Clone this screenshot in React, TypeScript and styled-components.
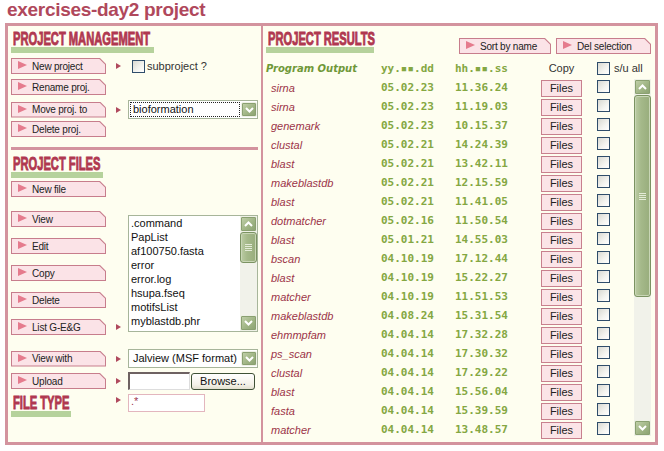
import React from 'react';
import styled, { createGlobalStyle } from 'styled-components';

const sans = `"Liberation Sans", Arial, sans-serif`;
const mono = `"DejaVu Sans Mono", "Liberation Mono", monospace`;

const C = {
  cream: '#fefef0',
  frame: '#d3939e',
  title: '#b0485c',
  heading: '#b03850',
  greenBar: '#b6d29c',
  green: '#84a742',
  name: '#9c3448',
  btnBg: '#fbe3e7',
  btnBorder: '#c77d8c',
  btnArrow: '#e57b8d',
  marker: '#b04a5e',
};

const GlobalStyle = createGlobalStyle`
  html, body { margin: 0; padding: 0; background: #fff; }
  body { font-family: ${sans}; }
  * { box-sizing: border-box; }
`;

const Page = styled.div`
  width: 664px;
  height: 451px;
  overflow: hidden;
  background: #fff;
`;

const AppTitle = styled.h1`
  margin: 0;
  padding-left: 7px;
  height: 20px;
  font: bold 19px/20px ${sans};
  letter-spacing: -0.3px;
  color: ${C.title};
`;

const Frame = styled.div`
  margin: 3px 0 0 5px;
  width: 653px;
  height: 422px;
  border: 3px solid ${C.frame};
  background: ${C.cream};
  display: flex;
`;

const LeftPanel = styled.section`
  width: 255px;
  flex: none;
  border-right: 2px solid ${C.frame};
  padding: 5px 0 0 3px;
  display: flex;
  flex-direction: column;
  align-items: flex-start;
`;

const RightPanel = styled.section`
  flex: 1;
  min-width: 0;
  padding: 5px 4px 0 3px;
  display: flex;
  flex-direction: column;
`;

/* ---------- section titles ---------- */
const TitleBlock = styled.div<{ $bar: number; $mt?: number }>`
  width: ${(p) => p.$bar}px;
  margin-top: ${(p) => p.$mt ?? 0}px;
  flex: none;
`;
const TitleText = styled.div`
  margin-left: 1.5px;
  font: bold 18px/16px ${sans};
  color: ${C.heading};
  white-space: nowrap;
  transform: scaleX(0.62);
  transform-origin: 0 0;
  -webkit-text-stroke: 0.9px ${C.heading};
`;
const TitleBar = styled.div`
  height: 6px;
  background: ${C.greenBar};
`;

function SectionTitle({ text, bar, mt }: { text: string; bar: number; mt?: number }) {
  return (
    <TitleBlock $bar={bar} $mt={mt}>
      <TitleText>{text}</TitleText>
      <TitleBar />
    </TitleBlock>
  );
}

/* ---------- buttons ---------- */
const ActionButton = styled.button<{ $w?: number }>`
  position: relative;
  width: ${(p) => p.$w ?? 95}px;
  height: 16px;
  padding: 0 0 0 21px;
  margin: 0;
  border: 0;
  background: ${C.btnBorder};
  clip-path: polygon(0 0, calc(100% - 6px) 0, 100% 6px, 100% 100%, 0 100%);
  display: flex;
  align-items: center;
  font: 10px ${sans};
  letter-spacing: -0.2px;
  color: #222;
  text-align: left;
  white-space: nowrap;
  cursor: pointer;
  &::before {
    content: '';
    position: absolute;
    inset: 1px 1px 1px 1px;
    background: ${C.btnBg};
    clip-path: polygon(0 0, calc(100% - 5.6px) 0, 100% 5.6px, 100% 100%, 0 100%);
  }
  &::after {
    content: '';
    position: absolute;
    left: 7px;
    top: 3px;
    width: 0;
    height: 0;
    border-left: 9px solid ${C.btnArrow};
    border-top: 4.5px solid transparent;
    border-bottom: 4.5px solid transparent;
  }
  & > span {
    position: relative;
  }
`;

function ActBtn({ children, w }: { children: React.ReactNode; w?: number }) {
  return (
    <ActionButton $w={w}>
      <span>{children}</span>
    </ActionButton>
  );
}

const Marker = styled.span`
  justify-self: start;
  margin-left: 10px;
  width: 0;
  height: 0;
  border-left: 5px solid ${C.marker};
  border-top: 3px solid transparent;
  border-bottom: 3px solid transparent;
`;

const Checkbox = styled.span`
  display: inline-block;
  flex: none;
  width: 13px;
  height: 13px;
  border: 1px solid #2f4d6b;
  background: linear-gradient(135deg, #d9d9d2 0%, #f4f4f0 60%, #ffffff 100%);
`;

const CheckLabel = styled.label`
  display: flex;
  align-items: center;
  gap: 2px;
  margin-left: 4px;
  font: 11px ${sans};
  color: #333;
`;

/* ---------- green XP widgets ---------- */
const ArrowBtn = styled.div<{ $w?: number; $h?: number }>`
  flex: none;
  width: ${(p) => p.$w ?? 17}px;
  height: ${(p) => p.$h ?? 16}px;
  border: 1px solid #eef1e6;
  border-radius: 2px;
  background: linear-gradient(135deg, #c3d2ac 0%, #a0b585 55%, #8aa170 100%);
  box-shadow: inset 0 0 0 1px #8aa071;
  display: flex;
  align-items: center;
  justify-content: center;
`;

function Chevron({ dir }: { dir: 'up' | 'down' }) {
  return (
    <svg width="9" height="6" viewBox="0 0 9 6">
      <polyline
        points={dir === 'up' ? '1,5 4.5,1.5 8,5' : '1,1 4.5,4.5 8,1'}
        fill="none"
        stroke="#fff"
        strokeWidth="2"
      />
    </svg>
  );
}

const ScrollTrack = styled.div<{ $h: number; $mt?: number }>`
  flex: none;
  width: 17px;
  height: ${(p) => p.$h}px;
  margin-top: ${(p) => p.$mt ?? 0}px;
  background: #f1f2ea;
  display: flex;
  flex-direction: column;
`;

const Thumb = styled.div<{ $h: number }>`
  height: ${(p) => p.$h}px;
  border: 1px solid #7b9362;
  border-radius: 3px;
  background: linear-gradient(90deg, #bccca5 0%, #a5b98a 40%, #98ad7c 100%);
  box-shadow: inset 0 0 0 1px #c9d6b6;
  display: flex;
  align-items: center;
  justify-content: center;
`;

const Grip = styled.div`
  width: 7px;
  height: 7px;
  background: repeating-linear-gradient(180deg, #e4ebd8 0 1px, transparent 1px 2px);
`;

const DownSlot = styled.div`
  margin-top: auto;
`;

function Scrollbar({ h, thumb, mt }: { h: number; thumb: number; mt?: number }) {
  return (
    <ScrollTrack $h={h} $mt={mt}>
      <ArrowBtn>
        <Chevron dir="up" />
      </ArrowBtn>
      <Thumb $h={thumb}>
        <Grip />
      </Thumb>
      <DownSlot>
        <ArrowBtn>
          <Chevron dir="down" />
        </ArrowBtn>
      </DownSlot>
    </ScrollTrack>
  );
}

/* ---------- form controls ---------- */
const Select = styled.div`
  width: 130px;
  height: 19px;
  border: 1px solid #a7b59a;
  background: #fff;
  display: flex;
  align-items: center;
  padding: 0 0 0 2px;
  gap: 2px;
  font: 11px ${sans};
  color: #111;
`;

const SelectValue = styled.span<{ $focus?: boolean }>`
  flex: 1;
  height: 13px;
  line-height: 13px;
  padding-left: 2px;
  white-space: nowrap;
  outline: ${(p) => (p.$focus ? '1px dotted #222' : 'none')};
`;

const FormRow = styled.div<{ $mt?: number }>`
  display: grid;
  grid-template-columns: 95px 22px 130px;
  align-items: center;
  height: 16px;
  margin-top: ${(p) => p.$mt ?? 0}px;
`;

const FileTypeRow = styled(FormRow)`
  height: auto;
  align-items: start;
  & > ${Marker} {
    margin-top: 3px;
  }
`;

const Divider = styled.div`
  width: 247px;
  height: 3px;
  margin-top: 10px;
  background: ${C.frame};
`;

const FilesBlock = styled.div`
  display: grid;
  grid-template-columns: 95px 22px 130px;
  grid-template-rows: repeat(5, 16px);
  row-gap: 11px;
  align-items: center;
  margin-top: 14px;
  & > ${ActionButton} {
    grid-column: 1;
  }
`;

const ListMarker = styled(Marker)`
  grid-column: 2;
  grid-row: 5;
`;

const ListBox = styled.div`
  grid-column: 3;
  grid-row: 1 / 6;
  align-self: center;
  height: 117px;
  border: 1px solid #a7b59a;
  background: #fff;
  display: flex;
`;

const ListItems = styled.ul`
  flex: 1;
  margin: 0;
  padding: 0 0 0 2px;
  list-style: none;
  font: 11px/14px ${sans};
  color: #111;
  overflow: hidden;
`;

const UploadGroup = styled.div`
  display: flex;
  align-items: center;
  gap: 1px;
`;

const FileInput = styled.div`
  width: 62px;
  height: 18px;
  background: #fff;
  border-top: 2px solid #6e6262;
  border-left: 2px solid #6e6262;
  border-right: 1px solid #ddd;
  border-bottom: 1px solid #ddd;
`;

const BrowseButton = styled.button`
  width: 64px;
  height: 17px;
  padding: 0;
  border: 1px solid #3f5236;
  border-radius: 3px;
  background: linear-gradient(180deg, #ffffff 0%, #f4f2e8 70%, #e2dfcf 100%);
  font: 11px ${sans};
  color: #111;
`;

const TextInput = styled.div`
  width: 77px;
  height: 18px;
  border: 1px solid #e3b6be;
  background: #fff;
  padding-left: 2px;
  font: 11px/13px ${sans};
  color: #a03850;
`;

/* ---------- results ---------- */
const TopRow = styled.div`
  display: flex;
  justify-content: space-between;
  align-items: flex-start;
`;

const ButtonGroup = styled.div`
  display: flex;
  gap: 5px;
  margin-top: 7px;
`;

const ResultGrid = styled.div<{ $h: number }>`
  display: grid;
  grid-template-columns: 115px 74px 86px 56px 1fr;
  align-items: center;
  height: ${(p) => p.$h}px;
`;

const HeaderRow = styled(ResultGrid)`
  margin-top: 6px;
`;

const HeadName = styled.span`
  font: bold oblique 10px ${`"DejaVu Sans", Verdana, sans-serif`};
  color: #6f9838;
  white-space: nowrap;
`;

const MonoCell = styled.span`
  font: bold 11px ${mono};
  color: ${C.green};
  white-space: nowrap;
`;

const CopyHead = styled.span`
  width: 41px;
  text-align: center;
  font: 11px ${sans};
  color: #333;
`;

const SelectAll = styled.label`
  display: flex;
  align-items: center;
  gap: 4px;
  font: 11px ${sans};
  color: #333;
`;

const ResultsArea = styled.div`
  display: flex;
  margin-top: 2px;
`;

const ResultsList = styled.div`
  flex: 1;
`;

const NameCell = styled.span`
  padding-left: 5px;
  font: italic 11px ${sans};
  color: ${C.name};
`;

const FilesButton = styled.button`
  width: 41px;
  height: 17px;
  padding: 0;
  border: 1px solid #c8808e;
  background: #fbe4e7;
  font: 11px ${sans};
  color: #222;
`;

const results: [string, string, string][] = [
  ['sirna', '05.02.23', '11.36.24'],
  ['sirna', '05.02.23', '11.19.03'],
  ['genemark', '05.02.23', '10.15.37'],
  ['clustal', '05.02.21', '14.24.39'],
  ['blast', '05.02.21', '13.42.11'],
  ['makeblastdb', '05.02.21', '12.15.59'],
  ['blast', '05.02.21', '11.41.05'],
  ['dotmatcher', '05.02.16', '11.50.54'],
  ['blast', '05.01.21', '14.55.03'],
  ['bscan', '04.10.19', '17.12.44'],
  ['blast', '04.10.19', '15.22.27'],
  ['matcher', '04.10.19', '11.51.53'],
  ['makeblastdb', '04.08.24', '15.31.54'],
  ['ehmmpfam', '04.04.14', '17.32.28'],
  ['ps_scan', '04.04.14', '17.30.32'],
  ['clustal', '04.04.14', '17.29.22'],
  ['blast', '04.04.14', '15.56.04'],
  ['fasta', '04.04.14', '15.39.59'],
  ['matcher', '04.04.14', '13.48.57'],
];

const files = [
  '.command',
  'PapList',
  'af100750.fasta',
  'error',
  'error.log',
  'hsupa.fseq',
  'motifsList',
  'myblastdb.phr',
];

export default function App() {
  return (
    <Page>
      <GlobalStyle />
      <AppTitle>exercises-day2 project</AppTitle>
      <Frame>
        <LeftPanel>
          <SectionTitle text="PROJECT MANAGEMENT" bar={143} />
          <FormRow $mt={5}>
            <ActBtn>New project</ActBtn>
            <Marker />
            <CheckLabel>
              <Checkbox />
              subproject ?
            </CheckLabel>
          </FormRow>
          <FormRow $mt={5}>
            <ActBtn>Rename proj.</ActBtn>
          </FormRow>
          <FormRow $mt={5}>
            <ActBtn>Move proj. to</ActBtn>
            <Marker />
            <Select>
              <SelectValue $focus>bioformation</SelectValue>
              <ArrowBtn $w={16} $h={15}>
                <Chevron dir="down" />
              </ArrowBtn>
            </Select>
          </FormRow>
          <FormRow $mt={5}>
            <ActBtn>Delete proj.</ActBtn>
          </FormRow>

          <Divider />

          <SectionTitle text="PROJECT FILES" bar={92} mt={6} />
          <FormRow $mt={3}>
            <ActBtn>New file</ActBtn>
          </FormRow>
          <FilesBlock>
            <ActBtn>View</ActBtn>
            <ActBtn>Edit</ActBtn>
            <ActBtn>Copy</ActBtn>
            <ActBtn>Delete</ActBtn>
            <ActBtn>List G-E&amp;G</ActBtn>
            <ListMarker />
            <ListBox>
              <ListItems>
                {files.map((f) => (
                  <li key={f}>{f}</li>
                ))}
              </ListItems>
              <Scrollbar h={115} thumb={31} />
            </ListBox>
          </FilesBlock>
          <FormRow $mt={14}>
            <ActBtn>View with</ActBtn>
            <Marker />
            <Select>
              <SelectValue>Jalview (MSF format)</SelectValue>
              <ArrowBtn $w={16} $h={15}>
                <Chevron dir="down" />
              </ArrowBtn>
            </Select>
          </FormRow>
          <FormRow $mt={7}>
            <ActBtn>Upload</ActBtn>
            <Marker />
            <UploadGroup>
              <FileInput />
              <BrowseButton>Browse...</BrowseButton>
            </UploadGroup>
          </FormRow>
          <FileTypeRow $mt={6}>
            <SectionTitle text="FILE TYPE" bar={60} mt={1} />
            <Marker />
            <TextInput>.*</TextInput>
          </FileTypeRow>
        </LeftPanel>

        <RightPanel>
          <TopRow>
            <SectionTitle text="PROJECT RESULTS" bar={108} />
            <ButtonGroup>
              <ActBtn w={92}>Sort by name</ActBtn>
              <ActBtn w={95}>Del selection</ActBtn>
            </ButtonGroup>
          </TopRow>
          <HeaderRow $h={16}>
            <HeadName>Program Output</HeadName>
            <MonoCell>yy.▪▪.dd</MonoCell>
            <MonoCell>hh.▪▪.ss</MonoCell>
            <CopyHead>Copy</CopyHead>
            <SelectAll>
              <Checkbox />
              s/u all
            </SelectAll>
          </HeaderRow>
          <ResultsArea>
            <ResultsList>
              {results.map(([name, date, time], i) => (
                <ResultGrid $h={19} key={i}>
                  <NameCell>{name}</NameCell>
                  <MonoCell>{date}</MonoCell>
                  <MonoCell>{time}</MonoCell>
                  <span>
                    <FilesButton>Files</FilesButton>
                  </span>
                  <span>
                    <Checkbox />
                  </span>
                </ResultGrid>
              ))}
            </ResultsList>
            <Scrollbar h={357} thumb={202} mt={1} />
          </ResultsArea>
        </RightPanel>
      </Frame>
    </Page>
  );
}
